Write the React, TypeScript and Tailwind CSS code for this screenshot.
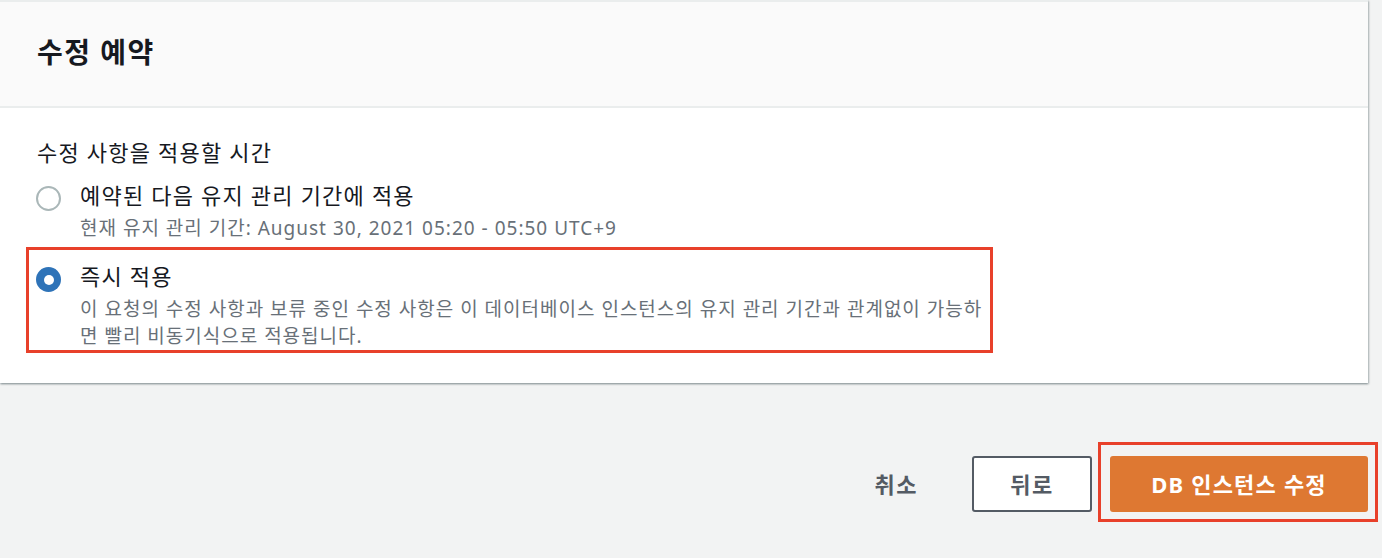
import type { ReactNode } from 'react';

const font = { fontFamily: '"Noto Sans", "Noto Sans CJK KR", sans-serif' };

function Radio({ checked }: { checked: boolean }) {
    if (checked) {
        return (
            <span className="mt-[5px] flex h-[25px] w-[25px] shrink-0 items-center justify-center rounded-full bg-[#2e73b8]">
                <span className="h-[10px] w-[10px] rounded-full bg-white" />
            </span>
        );
    }
    return <span className="mt-[5px] h-[25px] w-[25px] shrink-0 rounded-full border-[2.5px] border-[#aab7b8] bg-white" />;
}

function Option({ checked, title, highlight, children }: { checked: boolean; title: string; highlight?: boolean; children: ReactNode }) {
    return (
        <div
            className={`flex gap-[19px] border-[3px] pl-[7px] pr-[4px] pt-[12px] ${highlight ? 'border-[#e8402a]' : 'border-transparent'}`}
        >
            <Radio checked={checked} />
            <div className="whitespace-nowrap">
                <div className="text-[22px] leading-[28px] tracking-[1.2px] text-[#16191f]">{title}</div>
                <div className="mt-[6px] text-[19px] leading-[27px] tracking-[1px] text-[#687078]">{children}</div>
            </div>
        </div>
    );
}

export default function App() {
    return (
        <div className="min-h-[558px] w-[1382px] overflow-hidden bg-[#f2f3f3]" style={font}>
            <div className="w-[1368px] border-t-2 border-[#eaeded] bg-white shadow-[0_1px_2px_0_rgba(0,28,36,0.35),1px_1px_2px_0_rgba(0,28,36,0.2)]">
                <div className="border-b-2 border-[#eaeded] bg-[#fafafa] pb-[36px] pl-[37px] pt-[32px]">
                    <h2 className="text-[28px] font-bold leading-[36px] tracking-[1.5px] text-[#16191f]">수정 예약</h2>
                </div>
                <div className="pb-[30px] pl-[26px] pt-[30px]">
                    <div className="pl-[11px] text-[22px] leading-[28px] tracking-[1.2px] text-[#16191f]">수정 사항을 적용할 시간</div>
                    <div className="w-[967px]">
                        <Option checked={false} title="예약된 다음 유지 관리 기간에 적용">
                            현재 유지 관리 기간: August 30, 2021 05:20 - 05:50 UTC+9
                        </Option>
                        <div className="mt-[2px]">
                            <Option checked title="즉시 적용" highlight>
                                이 요청의 수정 사항과 보류 중인 수정 사항은 이 데이터베이스 인스턴스의 유지 관리 기간과 관계없이 가능하
                                <br />
                                면 빨리 비동기식으로 적용됩니다.
                            </Option>
                        </div>
                    </div>
                </div>
            </div>

            <div className="flex items-center justify-end gap-[18px] pr-[14px] pt-[73px]">
                <button className="px-[36px] text-[22px] font-bold tracking-[1.5px] text-[#545b64]">취소</button>
                <button className="h-[56px] w-[120px] rounded-[3px] border-2 border-[#545b64] bg-white text-[22px] font-bold tracking-[1.5px] text-[#545b64]">
                    뒤로
                </button>
                <div className="relative">
                    <button className="h-[56px] w-[258px] rounded-[3px] bg-[#de7832] text-[22px] font-bold tracking-[1.2px] text-white">
                        DB 인스턴스 수정
                    </button>
                    <span className="pointer-events-none absolute -bottom-[10px] -left-[12px] -right-[10px] -top-[14px] border-[3px] border-[#e8402a]" />
                </div>
            </div>
        </div>
    );
}
